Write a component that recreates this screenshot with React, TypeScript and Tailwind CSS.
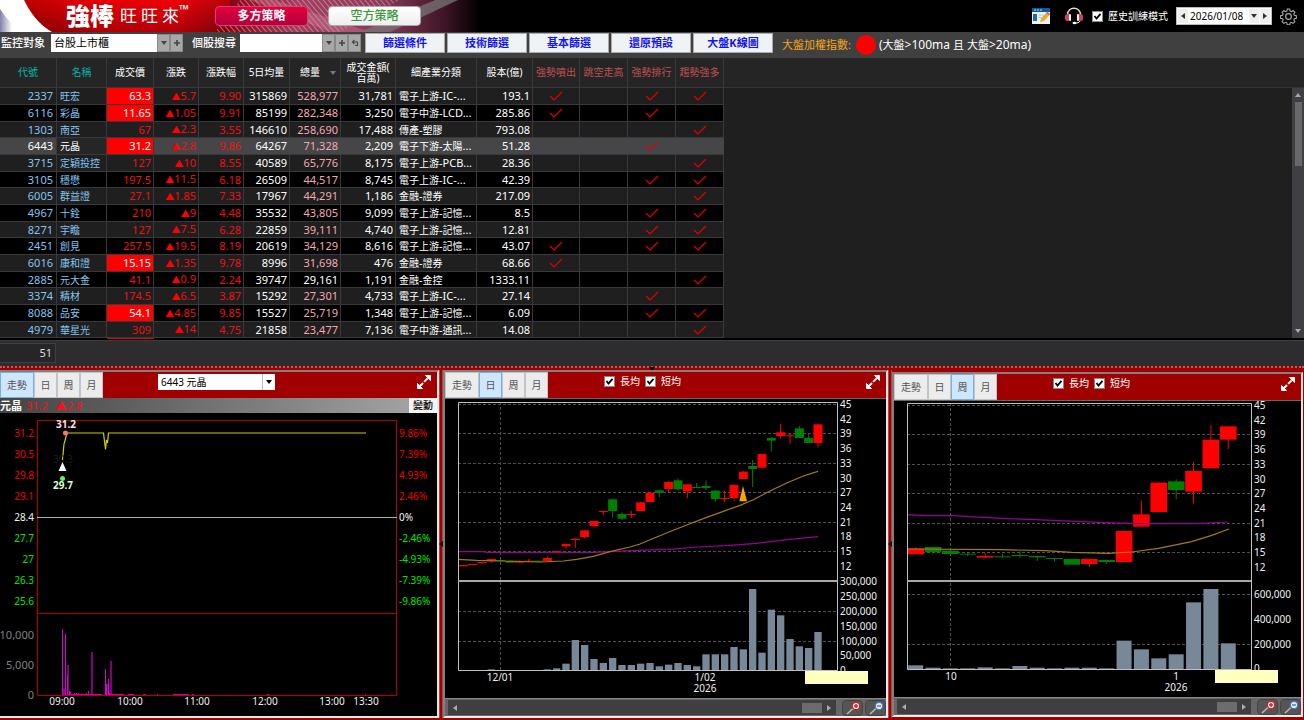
import { useState, type ReactNode } from 'react'

type Stock = {
  code: string
  name: string
  price: string
  limit?: boolean
  diff: string
  pct: string
  avg: string
  vol: string
  amount: string
  sector: string
  capital: string
  flags: string
  plain?: boolean
}

const stocks: Stock[] = [
  { code: '2337', name: '旺宏', price: '63.3', limit: true, diff: '5.7', pct: '9.90', avg: '315869', vol: '528,977', amount: '31,781', sector: '電子上游-IC-...', capital: '193.1', flags: '1011' },
  { code: '6116', name: '彩晶', price: '11.65', limit: true, diff: '1.05', pct: '9.91', avg: '85199', vol: '282,348', amount: '3,250', sector: '電子中游-LCD...', capital: '285.86', flags: '1010' },
  { code: '1303', name: '南亞', price: '67', diff: '2.3', pct: '3.55', avg: '146610', vol: '258,690', amount: '17,488', sector: '傳產-塑膠', capital: '793.08', flags: '0001' },
  { code: '6443', name: '元晶', price: '31.2', limit: true, diff: '2.8', pct: '9.86', avg: '64267', vol: '71,328', amount: '2,209', sector: '電子下游-太陽...', capital: '51.28', flags: '0010' },
  { code: '3715', name: '定穎投控', price: '127', diff: '10', pct: '8.55', avg: '40589', vol: '65,776', amount: '8,175', sector: '電子上游-PCB...', capital: '28.36', flags: '0001' },
  { code: '3105', name: '穩懋', price: '197.5', diff: '11.5', pct: '6.18', avg: '26509', vol: '44,517', amount: '8,745', sector: '電子上游-IC-...', capital: '42.39', flags: '0011' },
  { code: '6005', name: '群益證', price: '27.1', diff: '1.85', pct: '7.33', avg: '17967', vol: '44,291', amount: '1,186', sector: '金融-證券', capital: '217.09', flags: '0001' },
  { code: '4967', name: '十銓', price: '210', diff: '9', pct: '4.48', avg: '35532', vol: '43,805', amount: '9,099', sector: '電子上游-記憶...', capital: '8.5', flags: '0011' },
  { code: '8271', name: '宇瞻', price: '127', diff: '7.5', pct: '6.28', avg: '22859', vol: '39,111', amount: '4,740', sector: '電子上游-記憶...', capital: '12.81', flags: '0011' },
  { code: '2451', name: '創見', price: '257.5', diff: '19.5', pct: '8.19', avg: '20619', vol: '34,129', amount: '8,616', sector: '電子上游-記憶...', capital: '43.07', flags: '1011' },
  { code: '6016', name: '康和證', price: '15.15', limit: true, diff: '1.35', pct: '9.78', avg: '8996', vol: '31,698', amount: '476', sector: '金融-證券', capital: '68.66', flags: '1000' },
  { code: '2885', name: '元大金', price: '41.1', diff: '0.9', pct: '2.24', avg: '39747', vol: '29,161', amount: '1,191', sector: '金融-金控', capital: '1333.11', flags: '0001', plain: true },
  { code: '3374', name: '精材', price: '174.5', diff: '6.5', pct: '3.87', avg: '15292', vol: '27,301', amount: '4,733', sector: '電子上游-IC-...', capital: '27.14', flags: '0010' },
  { code: '8088', name: '品安', price: '54.1', limit: true, diff: '4.85', pct: '9.85', avg: '15527', vol: '25,719', amount: '1,348', sector: '電子上游-記憶...', capital: '6.09', flags: '0011' },
  { code: '4979', name: '華星光', price: '309', diff: '14', pct: '4.75', avg: '21858', vol: '23,477', amount: '7,136', sector: '電子中游-通訊...', capital: '14.08', flags: '0001' },
]

// color, high, body top, body bottom, low (chart units, 3 per pixel)
type Candle = [string, number, number, number, number]

const dayCandles: Candle[] = [
  ['r', 600, 600, 604, 604], ['r', 597, 597, 600, 600], ['r', 591, 591, 594, 597], ['r', 582, 582, 589, 593],
  ['g', 580, 585, 588, 590], ['g', 588, 588, 593, 593], ['r', 587, 588, 593, 594], ['r', 582, 587, 590, 590],
  ['g', 587, 587, 590, 590], ['r', 574, 579, 588, 590], ['r', 558, 558, 562, 562], ['r', 535, 537, 544, 551],
  ['r', 521, 521, 525, 549], ['r', 495, 496, 516, 521], ['r', 467, 468, 483, 487], ['r', 438, 438, 441, 450],
  ['g', 402, 403, 438, 458], ['g', 442, 447, 461, 465], ['r', 438, 447, 450, 459], ['r', 411, 412, 438, 438],
  ['r', 383, 383, 411, 411], ['g', 375, 376, 384, 396], ['r', 348, 351, 372, 381], ['g', 340, 346, 373, 376],
  ['r', 357, 358, 379, 400], ['g', 354, 366, 369, 369], ['g', 346, 363, 369, 375], ['g', 376, 377, 402, 411],
  ['r', 376, 399, 402, 411], ['r', 359, 360, 399, 407], ['r', 318, 320, 342, 342], ['g', 285, 303, 312, 366],
  ['r', 267, 267, 308, 308], ['g', 216, 219, 227, 260], ['r', 177, 202, 213, 221], ['r', 207, 211, 214, 236],
  ['g', 183, 190, 219, 219], ['g', 207, 219, 234, 234], ['r', 178, 178, 234, 247],
]

const dayVolumes = [
  330, 330, 330, 328, 330, 330, 330, 330, 331, 328, 325, 311, 240, 255, 297, 309, 294, 315, 315, 311, 309, 319, 314,
  309, 315, 319, 283, 283, 283, 261, 268, 87, 278, 149, 166, 237, 259, 264, 216,
]

const weekCandles: Candle[] = [
  ['r', 547, 550, 568, 568], ['g', 546, 546, 561, 566], ['g', 556, 557, 567, 568], ['g', 563, 566, 569, 573],
  ['r', 564, 573, 578, 578], ['g', 566, 574, 576, 578], ['g', 559, 570, 573, 578], ['g', 572, 573, 577, 588],
  ['g', 579, 579, 582, 590], ['g', 582, 582, 599, 599], ['r', 582, 582, 597, 606], ['g', 584, 585, 591, 597],
  ['r', 498, 498, 591, 591], ['r', 407, 448, 485, 485], ['r', 351, 353, 441, 441], ['g', 343, 349, 375, 403],
  ['r', 290, 318, 380, 415], ['r', 181, 224, 310, 310], ['r', 184, 184, 224, 252],
]

const weekVolumes = [316, 323, 325, 325, 322, 325, 318, 323, 325, 323, 323, 325, 242, 268, 295, 283, 127, 87, 250]

const prices = [45, 42, 39, 36, 33, 30, 27, 24, 21, 18, 15, 12]

// Ideographs sit one size below the digits beside them
function Mixed({ text }: { text: string }) {
  return (
    <>
      {text.split(/([\u4e00-\u9fff]+)/).map((part, i) => (
        <span key={i} className={i % 2 ? 'text-[10px]' : ''}>{part}</span>
      ))}
    </>
  )
}

function Caret({ dir = 'down', className = '' }: { dir?: 'down' | 'up' | 'left' | 'right'; className?: string }) {
  const shapes = { down: '0,1 6,1 3,5', up: '0,5 6,5 3,1', left: '5,0 5,6 1,3', right: '1,0 1,6 5,3' }
  return (
    <svg viewBox="0 0 6 6" className={`size-1.5 shrink-0 ${className}`} fill="currentColor">
      <polygon points={shapes[dir]} />
    </svg>
  )
}

function CheckField({ label, className }: { label: string; className: string }) {
  return (
    <label className={`flex items-center gap-[5px] text-[10px] ${className}`}>
      <span className="relative block size-[11px]">
        <input type="checkbox" defaultChecked className="peer block size-[11px] appearance-none border border-[#888] bg-white" />
        <svg viewBox="0 0 11 11" className="pointer-events-none absolute inset-0 hidden peer-checked:block" fill="none" stroke="#000" strokeWidth="1.8">
          <path d="M2.5 5 L4.5 7.5 L8.5 2.8" />
        </svg>
      </span>
      {label}
    </label>
  )
}

function TopBar() {
  return (
    <header className="relative flex h-8 shrink-0 items-center bg-black">
      <svg viewBox="0 0 480 32" className="absolute left-0 top-0 h-8 w-[480px]">
        <defs>
          <linearGradient id="banner" x1="0" x2="1">
            <stop offset="0" stopColor="#8c0000" />
            <stop offset="0.2" stopColor="#d6000a" />
            <stop offset="0.36" stopColor="#e8000c" />
            <stop offset="0.48" stopColor="#8a0612" />
            <stop offset="0.62" stopColor="#a04060" />
            <stop offset="0.8" stopColor="#8a3a58" />
            <stop offset="0.93" stopColor="#3a1424" />
            <stop offset="1" stopColor="#000" />
          </linearGradient>
          <linearGradient id="swoosh" x1="0" x2="1">
            <stop offset="0" stopColor="#8080a8" />
            <stop offset="0.5" stopColor="#fff" />
          </linearGradient>
          <linearGradient id="shade" x1="0" x2="0" y1="0" y2="1">
            <stop offset="0" stopColor="#f00" stopOpacity="0.35" />
            <stop offset="1" stopColor="#500" stopOpacity="0.35" />
          </linearGradient>
          <pattern id="stripes" width="4" height="4" patternUnits="userSpaceOnUse" patternTransform="rotate(50)">
            <rect width="4" height="1" fill="#e8a0b0" fillOpacity="0.6" />
          </pattern>
        </defs>
        <rect width="480" height="32" fill="url(#banner)" />
        <rect width="230" height="32" fill="url(#shade)" />
        <polygon points="215,32 240,0 400,0 340,32" fill="url(#stripes)" />
        <polygon points="250,0 275,0 370,32 330,32" fill="#d88aa4" fillOpacity="0.35" />
        <polygon points="360,32 435,0 458,0 390,32" fill="#777" fillOpacity="0.75" />
        <path d="M0 0 H24 C30 12 38 24 52 32 H0 Z" fill="#fff" />
        <path d="M0 9 C6 18 14 27 24 32 H0 Z" fill="url(#swoosh)" />
      </svg>
      <div className="relative flex w-full items-center pl-[66px]">
        <h1 className="flex items-center text-white">
          <span className="text-[24px] font-black leading-8">強棒</span>
          <span className="ml-1.5 flex gap-1 text-[17px]">
            <span>旺</span>
            <span>旺</span>
            <span>來</span>
          </span>
          <span className="self-start text-[13px] leading-[18px]">™</span>
        </h1>
        <button className="ml-[26px] h-5 w-[93px] rounded border border-[#e0406a] bg-linear-to-b from-[#e4003c] to-[#b0003c] text-[12px] font-bold leading-4 text-white">
          多方策略
        </button>
        <button className="ml-5 h-5 w-[93px] rounded border border-[#aaa] bg-linear-to-b from-white to-[#eee] text-[12px] font-medium leading-4 text-[#3a9a3a]">
          空方策略
        </button>

        <button aria-label="編輯版面" className="ml-auto">
          <svg viewBox="0 0 18 16" className="h-4 w-[18px]">
            <rect width="18" height="16" fill="#eef4fa" />
            <rect width="18" height="4" fill="#0d5aa0" />
            <path d="M2 2 H4 M5 2 H7 M8 2 H10" stroke="#bde" />
            <rect x="1" y="6" width="4" height="7" fill="#1a6ab8" />
            <path d="M6.5 7 H12 M6.5 9.5 H10" stroke="#9cf" />
            <polygon points="8,14 9,10.5 14,5 17,7.5 12,13" fill="#f5a623" />
            <polygon points="14,5 15.5,3.5 18,6 17,7.5" fill="#e06050" />
          </svg>
        </button>
        <button aria-label="客服" className="ml-3.5">
          <svg viewBox="0 0 20 18" className="h-[18px] w-5" fill="none">
            <path d="M3.5 8 C3 -1 17 -1 16.500 8" stroke="#ddd" strokeWidth="1.5" />
            <rect x="1" y="7" width="5" height="7" rx="2.500" fill="#d8404c" />
            <rect x="5" y="7" width="2" height="7" rx="1" fill="#fff" />
            <rect x="14" y="7" width="5" height="7" rx="2.500" fill="#d8404c" />
            <rect x="13" y="7" width="2" height="7" rx="1" fill="#fff" />
            <path d="M16 14 C15 16 13 16 11 16" stroke="#fff" />
            <ellipse cx="10.500" cy="16" rx="2" ry="1.300" fill="#fff" />
          </svg>
        </button>
        <CheckField label="歷史訓練模式" className="ml-2 text-white" />
        <div className="ml-2 flex h-[18px] w-24 items-stretch border border-[#bbb] bg-white p-px text-[#333]">
          <button aria-label="前一日" className="flex w-2.5 items-center justify-center bg-[#eee]"><Caret dir="left" /></button>
          <input aria-label="日期" defaultValue="2026/01/08" className="w-0 flex-1 pl-0.5 text-[10px] text-black outline-none" />
          <button aria-label="選擇日期" className="flex w-2.5 items-center justify-center bg-[#eee]"><Caret /></button>
          <button aria-label="後一日" className="ml-px flex w-2.5 items-center justify-center bg-[#eee]"><Caret dir="right" /></button>
        </div>
        <button aria-label="設定" className="ml-2 mr-[7px]">
          <svg viewBox="0 0 24 24" className="size-[17px]" fill="none" stroke="#aaa" strokeWidth="1.7">
            <path d="M10 1.500 h4 l.6 3.200 2.100.9 2.700-1.800 2.800 2.800-1.800 2.700.9 2.100 3.200.6 v4 l-3.200.6-.9 2.100 1.800 2.700-2.800 2.800-2.700-1.800-2.100.9-.6 3.200 h-4 l-.6-3.200-2.100-.9-2.700 1.800-2.800-2.800 1.800-2.700-.9-2.100-3.200-.6 v-4 l3.200-.6.9-2.100-1.800-2.700 2.800-2.800 2.700 1.800 2.100-.9z" transform="translate(1.300 .2) scale(.89)" />
            <circle cx="12" cy="12" r="4" />
          </svg>
        </button>
      </div>
    </header>
  )
}

function SmallButton({ label, children }: { label: string; children: ReactNode }) {
  return (
    <button aria-label={label} className="flex h-[18px] w-[13px] items-center justify-center border border-[#888] bg-[#a8a8a8] text-[#444]">
      {children}
    </button>
  )
}

function Toolbar() {
  const filters = ['篩選條件', '技術篩選', '基本篩選', '還原預設', '大盤K線圖']
  return (
    <div className="flex h-[26px] shrink-0 items-start bg-[#404040] pl-px pt-px text-[11px] text-white">
      <label htmlFor="market" className="font-medium leading-5">監控對象</label>
      <div className="ml-1.5 mt-px flex">
        <select id="market" className="h-[18px] w-[106px] appearance-none bg-white pl-[3px] text-[11px] leading-4 text-black">
          <option>台股上市櫃</option>
        </select>
        <SmallButton label="展開"><Caret /></SmallButton>
        <SmallButton label="新增"><Plus /></SmallButton>
      </div>
      <label htmlFor="search" className="ml-[9px] font-medium leading-5">個股搜尋</label>
      <div className="ml-1 mt-px flex">
        <input id="search" className="h-[18px] w-[82px] bg-white px-1 text-black outline-none" />
        <SmallButton label="展開"><Caret /></SmallButton>
        <SmallButton label="新增"><Plus /></SmallButton>
        <SmallButton label="返回">
          <svg viewBox="0 0 8 8" className="size-2" fill="none" stroke="currentColor" strokeWidth="1.2">
            <path d="M3.500 1 L1.500 3 L3.500 5 M1.500 3 H6.500 V6.500 H4" />
          </svg>
        </SmallButton>
      </div>
      <div className="ml-1 flex gap-0.5">
        {filters.map(f => (
          <button key={f} className="h-5 w-20 border border-[#aaa] bg-[#f0f3f6] text-[11px] font-bold leading-4 text-[#1414f0]">
            {f}
          </button>
        ))}
      </div>
      <span className="ml-[9px] leading-6 text-[#f5a51c]">大盤加權指數:</span>
      <span className="ml-[5px] mt-0.5 size-5 rounded-full bg-[#f00]" />
      <span className="ml-[3px] text-[12px] leading-6">
        (<span className="text-[11px]">大盤</span>&gt;100ma <span className="text-[11px]">且 大盤</span>&gt;20ma)
      </span>
    </div>
  )
}

function Plus() {
  return (
    <svg viewBox="0 0 8 8" className="size-2 shrink-0" stroke="currentColor" strokeWidth="1.6">
      <path d="M4 1 V7 M1 4 H7" />
    </svg>
  )
}

function StockTable() {
  const [selected, setSelected] = useState('6443')
  const head = 'border-b border-r border-[#39393c] p-0 text-center text-[10px] font-normal leading-[11px]'
  const base = 'border-b border-r border-[#39393c] p-0'
  const cell = `${base} pr-[2px] text-right`
  const textCell = `${base} pl-[3px] text-left`

  return (
    <table className="w-[724px] shrink-0 table-fixed border-separate border-spacing-0 self-start whitespace-nowrap text-[11px] leading-[14px] text-white">
      <colgroup>
        <col className="w-[57px]" />
        <col className="w-[50px]" />
        <col className="w-[47px]" />
        <col className="w-[45px]" />
        <col className="w-[45px]" />
        <col className="w-[46px]" />
        <col className="w-[51px]" />
        <col className="w-[55px]" />
        <col className="w-[81px]" />
        <col className="w-[56px]" />
        <col className="w-[47px]" />
        <col className="w-[48px]" />
        <col className="w-[48px]" />
        <col className="w-[48px]" />
      </colgroup>
      <thead className="bg-[#252525]">
        <tr className="h-[30px]">
          <th className={`${head} text-[#00b8a8]`}>代號</th>
          <th className={`${head} text-[#00b8a8]`}>名稱</th>
          <th className={head}>成交價</th>
          <th className={head}>漲跌</th>
          <th className={head}>漲跌幅</th>
          <th className={head}>5日均量</th>
          <th className={head}>
            <span className="flex items-center justify-between pl-2.5 pr-1">總量 <Caret className="text-[#777]" /></span>
          </th>
          <th className={head}>成交金額(<br />百萬)</th>
          <th className={head}>細產業分類</th>
          <th className={head}>股本(億)</th>
          <th className={`${head} text-[#c05050]`}>強勢噴出</th>
          <th className={`${head} text-[#c05050]`}>跳空走高</th>
          <th className={`${head} text-[#c05050]`}>強勢排行</th>
          <th className={`${head} text-[#c05050]`}>趨勢強多</th>
        </tr>
      </thead>
      <tbody>
        {stocks.map((s, i) => {
          const active = s.code === selected
          const bg = active ? 'bg-[#464648]' : i % 2 ? 'bg-black' : 'bg-[#1f1f1f]'
          const line = active ? 'border-r-[#464648]' : ''
          const tint = active ? 'text-white' : 'text-[#84c4f0]'
          return (
            <tr key={s.code} onClick={() => setSelected(s.code)} className={`${bg} ${i % 3 === 2 ? 'h-4' : 'h-[17px]'}`}>
              <td className={`${base} pr-[3px] text-right ${tint}`}>{s.code}</td>
              <td className={`${textCell} ${tint} ${active ? 'bg-[#262626]' : ''} text-[10px]`}>{s.name}</td>
              <td className={`${cell} ${s.limit ? 'bg-[#f00]' : 'text-[#f01010]'}`}>{s.price}</td>
              <td className={`${cell} ${line} text-[#f01010]`}><span className="text-[9px] text-[#f00]">▲</span>{s.diff}</td>
              <td className={`${cell} ${line} text-[#f01010]`}>{s.pct}</td>
              <td className={`${cell} ${line}`}>{s.avg}</td>
              <td className={`${cell} ${line} ${s.plain ? '' : 'text-[#f4a8b4]'}`}>{s.vol}</td>
              <td className={`${cell} ${line}`}>{s.amount}</td>
              <td className={`${textCell} ${line}`}><Mixed text={s.sector} /></td>
              <td className={`${cell} ${line}`}>{s.capital}</td>
              {s.flags.split('').map((f, k) => (
                <td key={k} className={`${base} ${line}`}>
                  {f === '1' && (
                    <svg viewBox="0 0 14 10" className="mx-auto h-2.5 w-3.5" fill="none" stroke="#e00000" strokeWidth="1.2">
                      <path d="M1 5 L5 9 L13 1" />
                    </svg>
                  )}
                </td>
              ))}
            </tr>
          )
        })}
      </tbody>
    </table>
  )
}

function TableArea() {
  return (
    <section className="flex shrink-0 flex-col bg-[#1f1f1f]">
      <div className="flex">
        <StockTable />
        <div className="flex flex-1 flex-col">
          <div className="h-[30px] border-b border-[#333] bg-[#252525]" />
          <div className="ml-auto flex w-3 flex-1 flex-col items-center justify-between bg-[#3f3f44] py-1 text-[#aaa]">
            <Caret dir="up" />
            <div className="mb-auto mt-1 h-16 w-[7px] bg-[#686868]" />
            <Caret />
          </div>
        </div>
      </div>
      <div className="flex h-0.5 bg-black">
        <div className="ml-[107px] h-px w-[47px] bg-[#e00000]" />
      </div>
      <div className="flex h-[26px] items-start border-t border-[#3c3c3e] bg-[#2d2d2f] pt-0.5">
        <div className="h-5 w-14 border border-l-0 border-[#3f3f42] bg-[#262628] pr-[3px] text-right text-[11px] leading-[18px] text-[#ddd]">51</div>
      </div>
    </section>
  )
}

function PeriodTabs({ initial }: { initial: string }) {
  const [tab, setTab] = useState(initial)
  return (
    <div className="flex self-stretch">
      {['走勢', '日', '周', '月'].map(t => (
        <button
          key={t}
          onClick={() => setTab(t)}
          className={`border text-[10px] text-[#555] ${t === '走勢' ? 'w-[34px]' : 'w-[23px]'} ${
            t === tab ? 'border-[#7ab0e0] bg-[#cfe6ff]' : 'border-[#c4c4c4] bg-[#ececec]'
          }`}
        >
          {t}
        </button>
      ))}
    </div>
  )
}

function ExpandButton() {
  return (
    <button aria-label="放大" className="ml-auto mr-[5px] mt-0.5">
      <svg viewBox="0 0 16 16" className="size-4" fill="#fff" stroke="#fff">
        <path d="M3.500 12.500 L12.500 3.500" strokeWidth="2" strokeDasharray="5 1.500" />
        <polygon points="9.500,1.500 14.500,1.500 14.500,6.500" />
        <polygon points="1.500,9.500 1.500,14.500 6.500,14.500" />
      </svg>
    </button>
  )
}

function TrendPanel() {
  const ups = ['31.2', '30.5', '29.8', '29.1', '28.4', '27.7', '27', '26.3', '25.6']
  const pcts = ['9.86%', '7.39%', '4.93%', '2.46%', '0%', '-2.46%', '-4.93%', '-7.39%', '-9.86%']
  const tone = (i: number) => (i < 4 ? '#f00000' : i === 4 ? '#f0f0f0' : '#00e800')
  const times: [number, string][] = [[62, '09:00'], [130, '10:00'], [197, '11:00'], [265, '12:00'], [332, '13:00'], [366, '13:30']]
  const bars = [
    [62, 629], [65, 634], [67, 675], [69, 691], [70, 692], [74, 693], [76, 693], [78, 693], [86, 693], [88, 691], [90, 694],
    [105, 669], [106, 684], [108, 679], [109, 693],
  ]
  const wideBars = [[67, 665], [91, 652], [110, 661], [63, 689], [106, 684]]

  return (
    <section className="flex min-h-0 flex-col border-y-2 border-r-2 border-b-[#e8e8e8] border-r-[#e8e8e8] border-t-[#808080] bg-black">
      <div className="flex h-[26px] shrink-0 items-start bg-[#a00000]">
        <PeriodTabs initial="走勢" />
        <div className="relative ml-[55px] mt-0.5 flex items-center">
          <select aria-label="股票" className="h-4 w-[117px] appearance-none bg-white pl-[3px] text-[10px] leading-4 text-black">
            <option>6443 元晶</option>
          </select>
          <span className="pointer-events-none absolute right-0 flex h-4 w-[13px] items-center justify-center border-l border-[#bbb] text-black">
            <Caret />
          </span>
        </div>
        <ExpandButton />
      </div>
      <div className="flex h-[15px] shrink-0 items-center bg-linear-to-r from-[#444] to-[#a8a8a8] text-[11px] leading-[15px]">
        <span className="font-bold text-white">元晶</span>
        <span className="ml-1 text-[#f0141c]">31.2</span>
        <span className="ml-2 text-[#f0141c]">▲2.8</span>
        <button className="ml-auto h-[15px] w-7 bg-[#f4f4f4] text-[10px] font-medium leading-[15px] text-black">變動</button>
      </div>
      <svg viewBox="0 413 437 303" className="min-h-0 w-full flex-1 overflow-visible text-[10px]">
        <path d="M37.500 695.500 V420.500 H396.500 V695.500 Z M37.500 613.500 H396.500" fill="none" stroke="#b40000" />
        <path d="M37 517.500 H397" stroke="#b0b0b0" />
        {ups.map((p, i) => (
          <text key={p} x="34" y={437 + i * 21} textAnchor="end" fill={tone(i)}>{p}</text>
        ))}
        {pcts.map((p, i) => (
          <text key={p} x="399" y={437 + i * 21} fill={tone(i)}>{p}</text>
        ))}
        {['10,000', '5,000', '0'].map((v, i) => (
          <text key={v} x="34" y={639 + i * 30} textAnchor="end" fill="#808080" className="text-[11px]">{v}</text>
        ))}
        {times.map(([x, t]) => (
          <text key={t} x={x} y="705" textAnchor="middle" fill="#f0f0f0">{t}</text>
        ))}
        {wideBars.map(([x, y], i) => (
          <rect key={i} x={x} y={y} width="2" height={695 - y} fill="#800080" />
        ))}
        {bars.map(([x, y], i) => (
          <rect key={i} x={x} y={y} width="1" height={695 - y} fill="#d800d8" />
        ))}
        <path d="M70 694.500 H102 M110 694.500 H124 M128 694.500 H134 M143 694.500 H146 M157 694.500 H158 M173 694.500 H189 M192 694.500 H194 M267 694.500 H269 M365 694.500 H366" stroke="#c000c0" />
        <path d="M62.500 460 L64 444 L66.500 435 L67.500 433 H103.500 L105.500 449.500 L106.500 440 L107.500 443 L108.500 433 H366" fill="none" stroke="#d0d000" strokeWidth="1.200" />
        <text x="63" y="463" textAnchor="middle" fill="#1c1c1c">30.3</text>
        <polygon points="62.500,462 66.500,471 58.500,471" fill="#fff" />
        <circle cx="65.500" cy="433" r="2.500" fill="#ff7070" />
        <circle cx="62.500" cy="478.500" r="2.500" fill="#60f060" />
        <text x="66" y="428" textAnchor="middle" fill="#ffe0e0" className="font-bold">31.2</text>
        <text x="63" y="489" textAnchor="middle" fill="#d8ffd8" className="font-bold">29.7</text>
      </svg>
    </section>
  )
}

interface ChartProps {
  tab: string
  className: string
  viewBox: string
  origin: number
  candles: Candle[]
  volumes: number[]
  first: number
  step: number
  width: number
  box: { left: number; right: number; top: number; bottom: number }
  priceTop: number
  gridX: number
  volumeGrid: number[]
  volumeLabels: [number, string][]
  dates: [number, number, string][]
  longMa: string
  shortMa: string
  marker?: string
  note: [number, number]
}

function CandlePanel(p: ChartProps) {
  const mid = 581
  const base = p.box.bottom
  const px = (v: number) => v / 3
  return (
    <section className={`flex min-h-0 flex-col border-2 border-b-[#f0f0f0] border-l-[#808080] border-r-[#e8e8e8] border-t-[#808080] bg-black ${p.className}`}>
      <div className="flex h-[27px] shrink-0 items-start border-b border-[#666] bg-[#a00000] text-white">
        <PeriodTabs initial={p.tab} />
        <CheckField label="長均" className="ml-14 mt-0.5" />
        <CheckField label="短均" className="ml-[5px] mt-0.5" />
        <ExpandButton />
      </div>
      <svg viewBox={p.viewBox} className="min-h-0 w-full flex-1 overflow-visible text-[10px]">
        <g stroke="#505050" strokeDasharray="3 2">
          {prices.filter((_, i) => i % 2 === 0).map((v, i) => (
            <path key={v} d={`M${p.box.left} ${Math.round(p.priceTop + i * 29.4) + 0.5} H${p.box.right}`} />
          ))}
          {p.volumeGrid.map(y => <path key={y} d={`M${p.box.left} ${y + 0.5} H${p.box.right}`} />)}
          <path d={`M${p.gridX + 0.5} ${p.box.top} V${base}`} />
        </g>
        {p.candles.map(([color, high, top, bottom, low], i) => {
          const x = p.origin + px(p.first + i * p.step)
          const fill = color === 'r' ? '#ff0000' : '#008000'
          return (
            <g key={i} fill={fill}>
              <rect x={x - 0.5} y={365 + px(high)} width="1" height={px(low - high)} />
              <rect x={x - px(p.width) / 2} y={365 + px(top)} width={px(p.width)} height={Math.max(1, px(bottom - top))} />
            </g>
          )
        })}
        {p.volumes.map((v, i) => {
          const w = px(p.width - 5)
          return <rect key={i} x={p.origin + px(p.first + i * p.step) - w / 2} y={560 + px(v)} width={w} height={base - 560 - px(v)} fill="#778899" />
        })}
        <g transform={`translate(${p.origin} 365) scale(${1 / 3})`} fill="none" strokeWidth="3.500">
          <polyline points={p.longMa} stroke="#990099" />
          <polyline points={p.shortMa} stroke="#a47a18" />
          {p.marker && <polygon points={p.marker} fill="#ffa500" />}
        </g>
        <path d={`M${p.box.left + 0.5} ${base + 0.5} V${p.box.top + 0.5} H${p.box.right + 0.5} V${base + 0.5} Z`} fill="none" stroke="#c0c0c0" />
        <path d={`M${p.box.left} ${mid} H${p.box.right}`} stroke="#a8a8a8" strokeWidth="2" />
        <g fill="#f0f0f0">
          {prices.map((v, i) => (
            <text key={v} x={p.box.right + 3} y={Math.round(p.priceTop + i * 14.7) + 4}>{v}</text>
          ))}
          {p.volumeLabels.map(([y, v]) => <text key={v} x={p.box.right + 3} y={y}>{v}</text>)}
          <rect x={p.box.right + 1} y={base + 1} width="20" height="8" fill="#000" />
          {p.dates.map(([x, y, t]) => <text key={t} x={x} y={y} textAnchor="middle">{t}</text>)}
        </g>
        <rect x={p.note[0]} y={p.note[1]} width="63" height="13" fill="#ffffc0" />
      </svg>
      <div className="flex h-[18px] shrink-0 items-center border-t border-[#888] bg-[#666] pl-[3px]">
        <div className="flex h-[15px] flex-1 items-center bg-[#3f3f41] px-1 text-[#aaa]">
          <Caret dir="left" />
          <div className="ml-auto mr-1 h-2.5 w-5 bg-[#6c6c6c]" />
          <Caret dir="right" />
        </div>
        <ZoomButton label="放大圖表" color="#d02020" sign="M9 5 H13 M11 3 V7" className="ml-1.5" />
        <ZoomButton label="縮小圖表" color="#3a78d0" sign="M9 5 H13" className="ml-0.5" />
      </div>
    </section>
  )
}

function ZoomButton({ label, color, sign, className }: { label: string; color: string; sign: string; className: string }) {
  return (
    <button aria-label={label} className={`flex h-4 w-[21px] items-center justify-center rounded-sm border border-[#444] bg-[#555] ${className}`}>
      <svg viewBox="0 0 16 14" className="h-3.5 w-4" fill="none" stroke={color}>
        <path d="M2 13 L8 7.500" stroke="#bbb" strokeWidth="1.500" />
        <circle cx="11" cy="5" r="3.700" fill="#f4e8e8" strokeWidth="1.200" />
        <path d={sign} strokeWidth="1.400" />
      </svg>
    </button>
  )
}

function Splitter() {
  return (
    <div className="flex items-center justify-center border-x border-[#a84848] bg-[#a00000] text-black">
      <Caret dir="left" />
    </div>
  )
}

export default function App() {
  return (
    <div className="flex h-screen min-h-[640px] flex-col overflow-hidden bg-[#a00000] font-['Noto_Sans','Noto_Sans_CJK_TC',sans-serif]">
      <TopBar />
      <Toolbar />
      <TableArea />
      <div className="flex h-1 shrink-0 items-start justify-center border-t-2 border-dotted border-[#b06060] bg-[#a00000] text-black">
        <Caret className="-mt-0.5" />
      </div>
      <main className="grid min-h-0 flex-1 grid-cols-[439fr_4px_445fr_4px_412fr] grid-rows-[minmax(0,1fr)] pb-0.5">
        <TrendPanel />
        <Splitter />
        <CandlePanel
          tab="日"
          className=""
          viewBox="445 399 441 299"
          origin={440}
          candles={dayCandles}
          volumes={dayVolumes}
          first={70}
          step={28}
          width={27}
          box={{ left: 458, right: 837, top: 402, bottom: 670 }}
          priceTop={404}
          gridX={500}
          volumeGrid={[611, 641]}
          volumeLabels={[[585, '300,000'], [600, '250,000'], [615, '200,000'], [630, '150,000'], [645, '100,000'], [659, '50,000'], [674, '0']]}
          dates={[[500, 681, '12/01'], [705, 681, '1/02'], [705, 692, '2026']]}
          longMa="54,560 130,560 140,562 460,562 510,560 570,557 690,553 770,546 860,542 950,535 1050,523 1134,515"
          shortMa="54,583 110,586 180,588 300,591 370,588 410,583 460,574 510,560 570,546 600,537 650,516 700,496 750,476 800,457 850,439 900,421 940,404 990,378 1040,354 1090,333 1134,319"
          marker="909,363 921,409 898,409"
          note={[805, 671]}
        />
        <Splitter />
        <CandlePanel
          tab="周"
          className="mb-px mr-px mt-0.5"
          viewBox="894 401 407 296"
          origin={885}
          candles={weekCandles}
          volumes={weekVolumes}
          first={92}
          step={52.1}
          width={50}
          box={{ left: 907, right: 1251, top: 403, bottom: 669 }}
          priceTop={405}
          gridX={950}
          volumeGrid={[594, 644]}
          volumeLabels={[[598, '600,000'], [623, '400,000'], [648, '200,000'], [672, '0']]}
          dates={[[951, 680, '10'], [1176, 680, '1'], [1176, 691, '2026']]}
          longMa="66,449 120,452 200,452 350,460 520,467 660,473 760,476 930,476 1030,471"
          shortMa="66,552 350,554 480,557 560,562 670,565 740,561 820,550 920,530 980,511 1032,492"
          note={[1215, 670]}
        />
      </main>
    </div>
  )
}
